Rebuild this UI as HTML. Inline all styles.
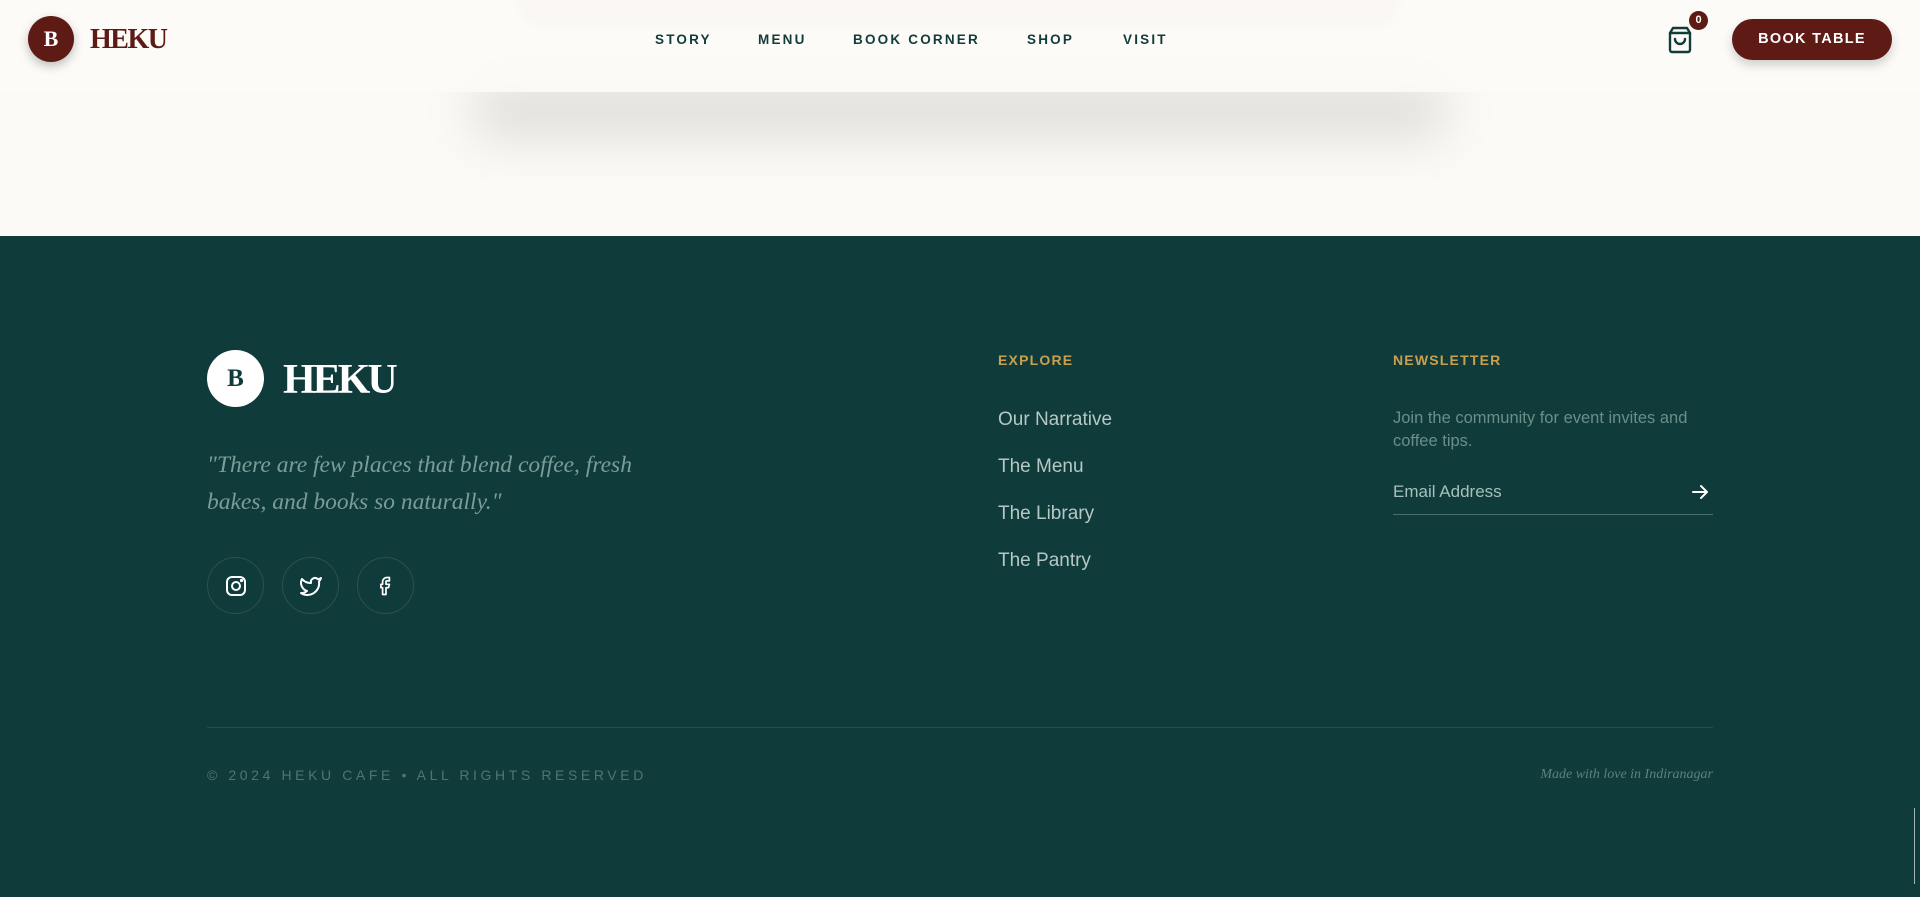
<!DOCTYPE html>
<html><head><meta charset="utf-8"><style>
*{margin:0;padding:0;box-sizing:border-box}
body{width:1920px;height:897px;overflow:hidden;background:#fbfaf6;font-family:"Liberation Sans",sans-serif;position:relative}
.abs{position:absolute}
.pinkbox{left:520px;top:-40px;width:876px;height:64px;background:#e3d3cf;border-radius:16px;filter:blur(5px)}
.shadow{left:470px;top:80px;width:980px;height:60px;background:rgba(0,0,0,0.1);filter:blur(24px);border-radius:40px}
header{position:absolute;left:0;top:0;width:1920px;height:92px;background:rgba(252,251,247,0.9)}
.nav a{position:absolute;top:32px;font-size:13.5px;letter-spacing:2.2px;color:#123c3a;font-weight:bold;text-decoration:none}
footer{position:absolute;left:0;top:236px;width:1920px;height:661px;background:#0f3b3b}
.serif{font-family:"Liberation Serif",serif}
.link{position:absolute;left:998px;font-size:19px;color:#b5c8c4}
.soc{position:absolute;top:321px;width:57px;height:57px;border:1px solid #2a5151;border-radius:50%;display:flex;align-items:center;justify-content:center}
</style></head><body>
<div class="abs pinkbox"></div>
<div class="abs shadow"></div>
<header>
 <div class="abs" style="left:28px;top:16px;width:46px;height:46px;border-radius:50%;background:#5e1a15;box-shadow:0 4px 10px rgba(0,0,0,.25);color:#fff;font:bold 22px 'Liberation Serif',serif;display:flex;align-items:center;justify-content:center">B</div>
 <div class="abs serif" style="left:90px;top:24px;font-size:28px;font-weight:bold;color:#5e1a15;letter-spacing:-1.5px">HEKU</div>
 <div class="nav">
  <a style="left:655px">STORY</a><a style="left:758px">MENU</a><a style="left:853px">BOOK CORNER</a><a style="left:1027px">SHOP</a><a style="left:1123px">VISIT</a>
 </div>
 <svg class="abs" style="left:1667px;top:26px" width="26" height="28" viewBox="0 0 26 28" fill="none" stroke="#123c3a" stroke-width="2.4" stroke-linejoin="round" stroke-linecap="round"><path d="M3 7h20v17a2 2 0 0 1-2 2H5a2 2 0 0 1-2-2z"/><path d="M3 7l3-5h14l3 5"/><path d="M8 13a5 5 0 0 0 10 0"/></svg>
 <div class="abs" style="left:1689px;top:11px;width:19px;height:19px;border-radius:50%;background:#5e1a15;color:#fff;font-size:11px;font-weight:bold;text-align:center;line-height:19px">0</div>
 <div class="abs" style="left:1732px;top:19px;width:160px;height:41px;border-radius:21px;background:#5e1a15;color:#fff;font-size:14.5px;font-weight:bold;letter-spacing:1.3px;text-align:center;line-height:41px;box-shadow:0 5px 10px rgba(0,0,0,.18)">BOOK TABLE</div>
</header>
<footer>
 <div class="abs" style="left:207px;top:114px;width:57px;height:57px;border-radius:50%;background:#fff;color:#0f3b3b;font:bold 25px 'Liberation Serif',serif;display:flex;align-items:center;justify-content:center">B</div>
 <div class="abs serif" style="left:283px;top:120px;font-size:42px;font-weight:bold;color:#fff;letter-spacing:-3px">HEKU</div>
 <div class="abs serif" style="left:207px;top:211px;width:480px;font-size:23.5px;font-style:italic;line-height:37px;color:#7c9c97">"There are few places that blend coffee, fresh bakes, and books so naturally."</div>
 <div class="soc" style="left:207px"><svg width="24" height="24" viewBox="0 0 24 24" fill="none" stroke="#fff" stroke-width="2"><rect x="3" y="3" width="18" height="18" rx="5"/><circle cx="12" cy="12" r="4"/><circle cx="17.5" cy="6.5" r=".6" fill="#fff"/></svg></div>
 <div class="soc" style="left:282px"><svg width="24" height="24" viewBox="0 0 24 24" fill="none" stroke="#fff" stroke-width="2" stroke-linejoin="round"><path d="M22 4s-.7 2.1-2 3.4c1.6 10-9.4 17.3-18 11.6 2.2.1 4.4-.6 6-2C3 15.5.5 9.6 3 5c2.2 2.6 5.6 4.1 9 4-.9-4.2 4-6.6 7-3.8 1.1 0 3-1.2 3-1.2z"/></svg></div>
 <div class="soc" style="left:357px"><svg width="24" height="24" viewBox="0 0 24 24" fill="none" stroke="#fff" stroke-width="2" stroke-linejoin="round"><path d="M16 2h-3a5 5 0 0 0-5 5v3H6v4h2v8h4v-8h3l1-4h-4V7a1 1 0 0 1 1-1h3z" transform="translate(12 12) scale(.85) translate(-12 -12)"/></svg></div>

 <div class="abs" style="left:998px;top:116px;font-size:14px;font-weight:bold;letter-spacing:1.2px;color:#c9a050">EXPLORE</div>
 <div class="link" style="top:173px">Our Narrative</div>
 <div class="link" style="top:220px">The Menu</div>
 <div class="link" style="top:267px">The Library</div>
 <div class="link" style="top:314px">The Pantry</div>

 <div class="abs" style="left:1393px;top:116px;font-size:14px;font-weight:bold;letter-spacing:1.2px;color:#c9a050">NEWSLETTER</div>
 <div class="abs" style="left:1393px;top:171px;width:330px;font-size:16.5px;line-height:23px;color:#6b8e89">Join the community for event invites and coffee tips.</div>
 <div class="abs" style="left:1393px;top:246px;font-size:17px;color:#a9bfbb">Email Address</div>
 <svg class="abs" style="left:1690px;top:246px" width="20" height="20" viewBox="0 0 20 20" fill="none" stroke="#fff" stroke-width="2" stroke-linecap="round" stroke-linejoin="round"><path d="M3 10h14M11 4l6 6-6 6"/></svg>
 <div class="abs" style="left:1393px;top:278px;width:320px;height:1px;background:#4a6e6b"></div>

 <div class="abs" style="left:207px;top:491px;width:1506px;height:1px;background:#22504f"></div>
 <div class="abs" style="left:207px;top:531px;font-size:14px;letter-spacing:3.6px;color:#4e7572">© 2024 HEKU CAFE • ALL RIGHTS RESERVED</div>
 <div class="abs serif" style="right:207px;top:531px;font-size:14px;font-style:italic;color:#5e817d">Made with love in Indiranagar</div>
 <div class="abs" style="left:1914px;top:572px;width:1px;height:76px;background:#9fb5b2"></div>
</footer>
</body></html>
